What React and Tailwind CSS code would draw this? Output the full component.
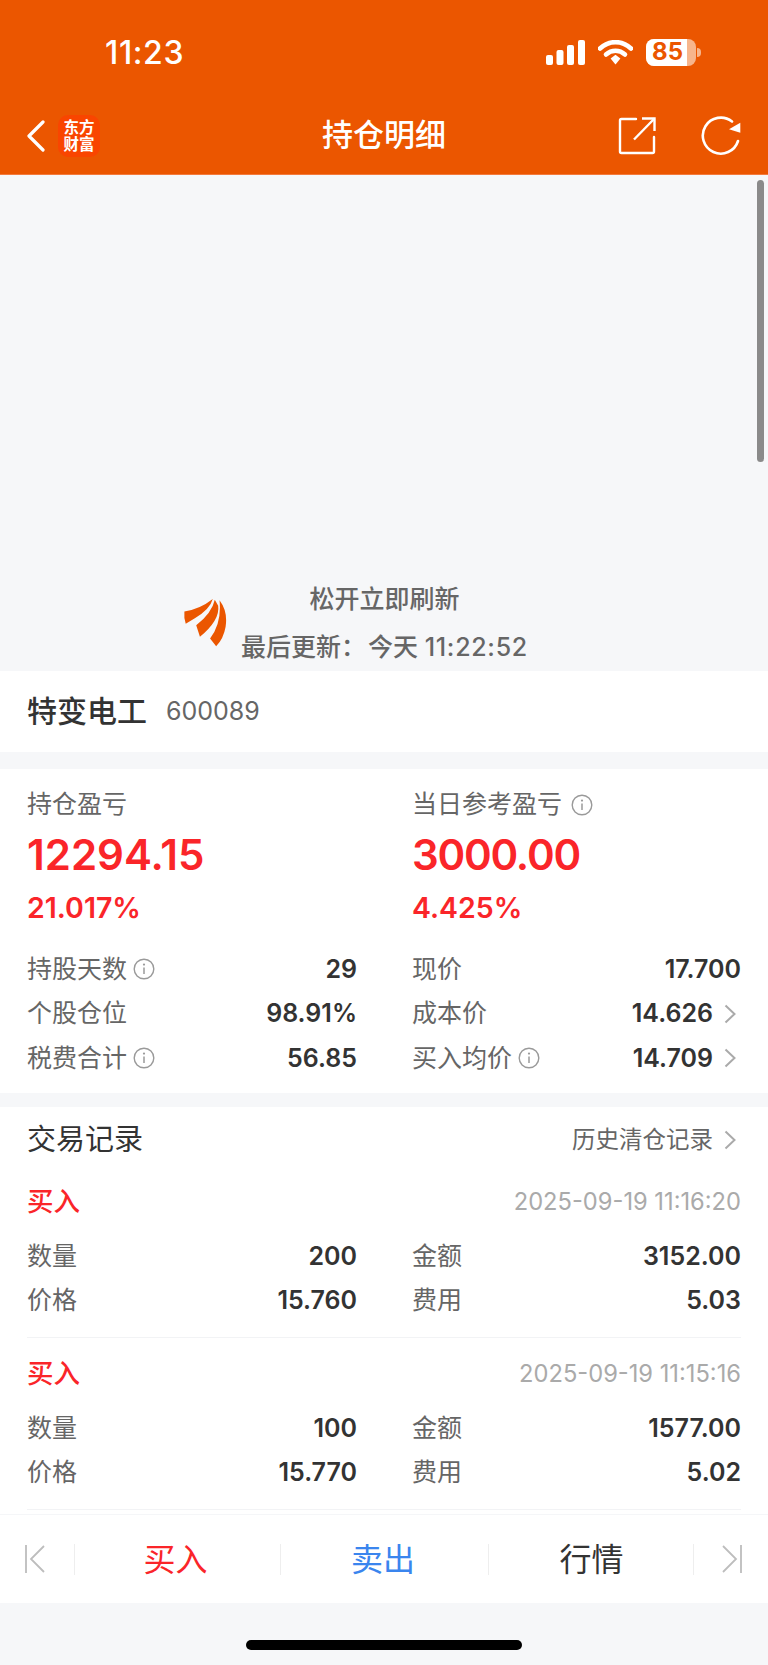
const Info = () => (
  <svg width="22" height="22" viewBox="0 0 22 22" fill="none" className="shrink-0">
    <circle cx="11" cy="11" r="9.8" stroke="#9a9a9a" strokeWidth="1.4" />
    <circle cx="11" cy="6.6" r="1.1" fill="#9a9a9a" />
    <path d="M11 9.6V16" stroke="#9a9a9a" strokeWidth="1.5" />
  </svg>
);

const Chevron = ({ className = "" }) => (
  <svg width="12" height="20" viewBox="0 0 12 20" fill="none" className={className}>
    <path d="M1.500 1.500l9 8.500-9 8.500" stroke="#aaaaaa" strokeWidth="2" />
  </svg>
);

const Stat = ({ label, value, info, chevron }) => (
  <div className="flex h-[44.500px] items-center justify-between">
    <div className="flex items-center gap-[6px] text-[25px] text-[#666666]">
      <span>{label}</span>
      {info && <Info />}
    </div>
    <div className={`flex items-center gap-[11px] text-[25px] font-semibold text-[#333333] ${chevron ? "pr-[5px]" : ""}`}>
      <span>{value}</span>
      {chevron && <Chevron />}
    </div>
  </div>
);

const Headline = ({ label, value, percent, info, tight }) => (
  <div className="flex flex-col">
    <div className="flex h-[36px] items-center gap-[9px] text-[25px] text-[#666666]">
      <span>{label}</span>
      {info && <Info />}
    </div>
    <div className={`mt-[6px] h-[52px] text-[42px] leading-[52px] font-semibold text-[#fa2529] ${tight ? "tracking-[-1.200px]" : ""}`}>{value}</div>
    <div className="mt-[7px] h-[40px] text-[28.500px] leading-[40px] font-semibold text-[#fa2529]">{percent}</div>
  </div>
);

const Cell = ({ label, value }) => (
  <div className="flex h-[44.500px] items-center justify-between">
    <span className="text-[25px] text-[#666666]">{label}</span>
    <span className="text-[25px] font-semibold text-[#333333]">{value}</span>
  </div>
);

const Trade = ({ date, qty, amount, price, fee }) => (
  <div className="mr-[27px] mb-[14px] ml-[27px] flex h-[158px] flex-col border-b border-[#f2f3f5]">
    <div className="flex h-[44px] items-center justify-between">
      <span className="text-[26.500px] font-medium text-[#fa2529]">买入</span>
      <span className="text-[23.700px] text-[#aaaaaa]">{date}</span>
    </div>
    <div className="mt-[10px] grid grid-cols-[330px_329px] gap-x-[55px]">
      <Cell label="数量" value={qty} />
      <Cell label="金额" value={amount} />
      <Cell label="价格" value={price} />
      <Cell label="费用" value={fee} />
    </div>
  </div>
);

const Divider = () => <div className="h-[31px] w-px bg-[#eeeeee]" />;

export default function App() {
  return (
    <div className="relative flex h-[1665px] w-[768px] flex-col overflow-hidden bg-[#f6f7f9] font-['Inter','Noto_Sans_CJK_SC',sans-serif]">
      <header className="h-[175px] shrink-0 border-b border-[#f47a3c] bg-[#eb5600] text-white">
        <div className="flex h-[104px] items-center justify-between pr-[67px] pl-[105px]">
          <span className="mt-[1px] text-[32px] font-medium tracking-[0.6px]">11:23</span>
          <div className="flex items-center gap-[13px]">
            <svg width="39" height="25" viewBox="0 0 39 25" fill="white" className="-ml-[1px]">
              <rect x="0" y="15" width="7" height="10" rx="2" />
              <rect x="10.500" y="10" width="7" height="15" rx="2" />
              <rect x="21" y="5" width="7" height="20" rx="2" />
              <rect x="32" y="0" width="7" height="25" rx="2" />
            </svg>
            <svg width="35" height="25" viewBox="0 0 35 25" fill="none" stroke="white">
              <path d="M2 8.500C11 0 24 0 33 8.500" strokeWidth="4.600" strokeLinecap="round" />
              <path d="M8 14.500C13.500 9.500 21.500 9.500 27 14.500" strokeWidth="4.600" strokeLinecap="round" />
              <path d="M12.600 18.600L17.500 14.800L22.400 18.600L17.500 24.600Z" fill="white" stroke="none" />
            </svg>
            <div className="flex items-center gap-[1px]">
              <div className="relative flex h-[27px] w-[50px] items-center overflow-hidden rounded-[8px] bg-[#f7b58c]">
                <div className="flex h-full w-[41px] items-center justify-center bg-white pl-[2px] text-[24px] font-bold text-[#eb5600]">85</div>
              </div>
              <div className="h-[9px] w-[4px] rounded-r-full bg-[#f7b58c]" />
            </div>
          </div>
        </div>
        <div className="relative flex h-[70px] items-center justify-between pr-[27px] pb-[7px] pl-[26px]">
          <div className="flex items-center gap-[13px]">
            <svg width="19" height="32" viewBox="0 0 19 32" fill="none">
              <path d="M17 2L3 16l14 14" stroke="white" strokeWidth="3.200" strokeLinecap="round" strokeLinejoin="round" />
            </svg>
            <div className="flex h-[42px] w-[42px] flex-col items-center justify-center rounded-[10px] bg-[#f94500] text-[15.500px] leading-[17px] font-bold text-white">
              <span>东方</span>
              <span>财富</span>
            </div>
          </div>
          <span className="absolute inset-x-0 top-[10px] text-center text-[31px] leading-[42px] font-medium">持仓明细</span>
          <div className="flex items-center gap-[45px]">
            <svg width="38" height="38" viewBox="0 0 38 38" fill="none" stroke="white" strokeWidth="2.400">
              <path d="M18 2H3.500A1.500 1.500 0 0 0 2 3.500V34.500A1.500 1.500 0 0 0 3.500 36H34.500A1.500 1.500 0 0 0 36 34.500V20" strokeLinecap="round" />
              <path d="M16 22.500L36.500 1.500" />
              <path d="M24 1.500H36.500V14" />
            </svg>
            <svg width="40" height="40" viewBox="0 0 40 40" fill="none">
              <path d="M37 25A18 18 0 1 1 31 5.500" stroke="white" strokeWidth="2.600" strokeLinecap="round" />
              <path d="M39.300 6.700V16.700L28 13.300Z" fill="white" />
            </svg>
          </div>
        </div>
      </header>

      <div className="flex h-[496px] shrink-0 items-end pl-[183px]">
        <svg width="44" height="49" viewBox="100 85 130 145" className="mb-[24px]">
          <path d="M104 125Q150 118 188 88Q180 118 135 145L108 161Q102 145 104 125Z" fill="#eb5600" />
          <path d="M194 90Q186 128 139 166L150 200Q210 150 204 108Z" fill="#eb5600" />
          <path d="M208 92Q233 125 226 170Q220 205 198 228L180 205Q215 160 208 92Z" fill="#eb5600" />
        </svg>
        <div className="ml-[14px] flex flex-col items-center font-medium text-[#666666]">
          <span className="text-[25px] leading-[48px]">松开立即刷新</span>
          <span className="text-[25px] leading-[48px]">最后更新：<span className="ml-[2px]">今天</span> <span className="tracking-[0.7px]">11:22:52</span></span>
        </div>
      </div>

      <div className="absolute top-[180px] right-[4px] h-[282px] w-[7px] rounded-full bg-[#8a8a8a]" />

      <div className="flex h-[81px] shrink-0 items-center bg-white pl-[27px]">
        <span className="text-[30px] font-medium text-[#333333]">特变电工</span>
        <span className="ml-[19px] text-[25px] text-[#666666]">600089</span>
      </div>

      <section className="mt-[17px] flex h-[324px] shrink-0 flex-col bg-white px-[27px] pt-[18px]">
        <div className="grid grid-cols-[330px_329px] gap-x-[55px]">
          <Headline label="持仓盈亏" value="12294.15" percent="21.017%" />
          <Headline label="当日参考盈亏" value="3000.00" percent="4.425%" info tight />
        </div>
        <div className="mt-[19px] grid grid-cols-[330px_329px] gap-x-[55px]">
          <Stat label="持股天数" value="29" info />
          <Stat label="现价" value="17.700" />
          <Stat label="个股仓位" value="98.91%" />
          <Stat label="成本价" value="14.626" chevron />
          <Stat label="税费合计" value="56.85" info />
          <Stat label="买入均价" value="14.709" chevron info />
        </div>
      </section>

      <section className="mt-[14px] h-[407px] shrink-0 bg-white">
        <div className="mb-[8px] flex h-[65px] items-center justify-between pr-[32px] pl-[27px]">
          <span className="text-[29px] text-[#333333]">交易记录</span>
          <div className="flex items-center gap-[11px]">
            <span className="text-[23.500px] text-[#666666]">历史清仓记录</span>
            <Chevron />
          </div>
        </div>
        <Trade date="2025-09-19 11:16:20" qty="200" amount="3152.00" price="15.760" fee="5.03" />
        <Trade date="2025-09-19 11:15:16" qty="100" amount="1577.00" price="15.770" fee="5.02" />
      </section>

      <nav className="grid h-[89px] shrink-0 grid-cols-[74px_1px_205px_1px_207px_1px_204px_1px_74px] items-center border-t border-[#f5f6f8] bg-white">
        <svg width="24" height="28" viewBox="0 0 24 28" fill="none" className="ml-[24px]" stroke="#bdbdbd" strokeWidth="1.800">
          <path d="M2 0V28" />
          <path d="M20 1L7 14l13 13" />
        </svg>
        <Divider />
        <span className="pt-[2px] pr-[4px] text-center text-[32px] text-[#fa2529]">买入</span>
        <Divider />
        <span className="pt-[2px] pr-[3px] text-center text-[32px] text-[#3a85ee]">卖出</span>
        <Divider />
        <span className="pt-[2px] pl-[1px] text-center text-[32px] text-[#333333]">行情</span>
        <Divider />
        <svg width="24" height="28" viewBox="0 0 24 28" fill="none" className="ml-[27px]" stroke="#bdbdbd" strokeWidth="1.800">
          <path d="M20 0V28" />
          <path d="M2 1l13 13L2 27" />
        </svg>
      </nav>

      <div className="flex flex-1 justify-center pt-[37px]">
        <div className="h-[10px] w-[276px] rounded-full bg-black" />
      </div>
    </div>
  );
}
